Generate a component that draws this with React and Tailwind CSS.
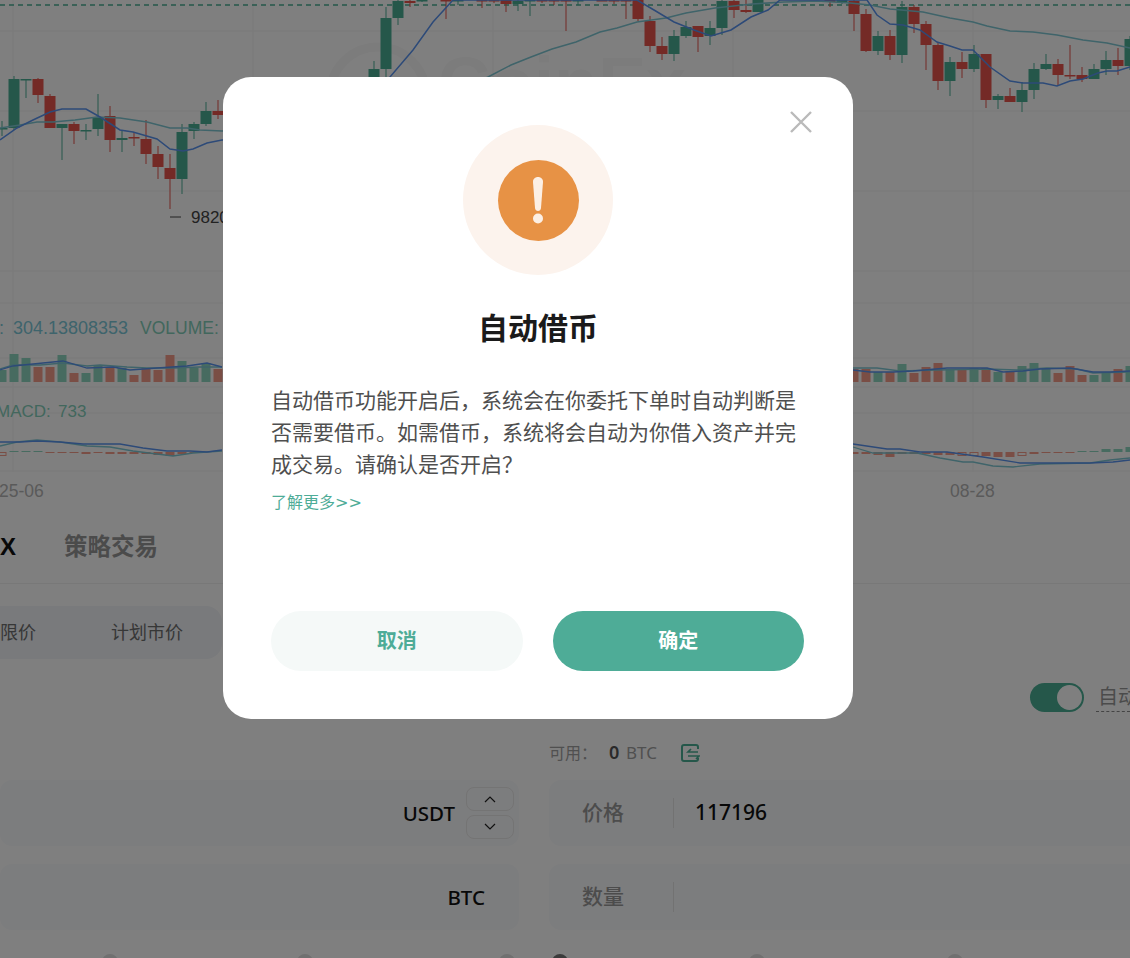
import React from 'react';

const GREEN = '#4aaf95';
const RED = '#e8544d';
const GRID = '#f3f3f3';

// [x, bodyTop, bodyBottom, wickTop, wickBottom, color]
const candles = [
  [2, 128, 129, 121, 136, 'g'], [14, 79, 128, 76, 130, 'g'], [26, 79, 80, 79, 98, 'g'], [38, 79, 95, 78, 103, 'r'],
  [50, 96, 128, 94, 128, 'r'], [62, 124, 128, 124, 160, 'g'], [74, 124, 131, 122, 144, 'r'], [86, 130, 131, 124, 140, 'g'],
  [98, 117, 129, 94, 136, 'g'], [110, 116, 140, 106, 152, 'r'], [122, 138, 140, 131, 152, 'g'], [134, 137, 138, 132, 146, 'r'],
  [146, 139, 154, 120, 164, 'r'], [158, 154, 167, 146, 179, 'r'], [170, 168, 179, 154, 209, 'r'], [182, 132, 179, 124, 194, 'g'],
  [194, 124, 131, 122, 139, 'g'], [206, 111, 124, 102, 126, 'g'], [218, 111, 115, 100, 119, 'r'],
  [374, 69, 90, 61, 90, 'g'], [386, 18, 69, 7, 80, 'g'], [398, 1, 18, 0, 25, 'g'], [410, 1, 3, 0, 7, 'r'], [422, 0, 1, 0, 2, 'g'],
  [446, 0, 1, 0, 19, 'r'], [458, 0, 1, 0, 5, 'g'], [482, 0, 1, 0, 8, 'r'], [494, 0, 1, 0, 3, 'r'], [506, 0, 4, 0, 12, 'r'],
  [518, 1, 4, 0, 11, 'g'], [530, 0, 1, 0, 16, 'g'], [542, 0, 1, 0, 3, 'r'], [554, 0, 1, 0, 5, 'r'], [566, 0, 1, 0, 31, 'r'],
  [578, 0, 1, 0, 5, 'g'], [602, 0, 1, 0, 1, 'r'], [614, 0, 1, 0, 4, 'r'], [626, 0, 1, 0, 19, 'r'], [638, 0, 19, 0, 21, 'r'],
  [650, 21, 46, 16, 52, 'r'], [662, 46, 54, 37, 60, 'r'], [674, 36, 54, 30, 61, 'g'], [686, 27, 36, 21, 38, 'g'],
  [698, 26, 37, 26, 52, 'r'], [710, 28, 36, 21, 45, 'g'], [722, 1, 28, 0, 35, 'g'], [734, 1, 10, 0, 18, 'r'],
  [746, 10, 12, 0, 13, 'r'], [758, 0, 12, 0, 12, 'g'], [830, 0, 2, 0, 7, 'r'], [842, 0, 2, 0, 4, 'g'],
  [854, 1, 14, 0, 31, 'r'], [866, 14, 51, 9, 52, 'r'], [878, 36, 51, 31, 55, 'g'], [890, 36, 55, 30, 60, 'r'],
  [902, 7, 55, 1, 63, 'g'], [914, 7, 24, 5, 33, 'r'], [926, 24, 45, 21, 70, 'r'], [938, 45, 81, 43, 90, 'r'],
  [950, 62, 81, 57, 96, 'g'], [962, 62, 69, 52, 78, 'r'], [974, 54, 69, 45, 72, 'g'], [986, 54, 100, 54, 108, 'r'],
  [998, 96, 100, 94, 109, 'g'], [1010, 96, 102, 88, 102, 'r'], [1022, 90, 102, 82, 112, 'g'], [1034, 69, 90, 63, 99, 'g'],
  [1046, 64, 69, 54, 70, 'g'], [1058, 64, 75, 59, 86, 'r'], [1070, 75, 76, 45, 79, 'r'], [1082, 75, 79, 67, 82, 'r'],
  [1094, 69, 79, 64, 79, 'g'], [1106, 60, 69, 51, 75, 'g'], [1118, 60, 66, 48, 75, 'r'], [1130, 39, 66, 36, 70, 'g'],
];

const maBlue = '0,140 17,128 33,120 50,112 62,109 86,109 100,117 120,130 133,132 157,139 170,149 183,151 193,149 207,143 222,140 300,140 390,77 413,50 433,22 453,0 637,0 654,10 674,22 694,30 711,36 731,30 751,17 768,10 780,0 867,0 877,15 890,24 903,25 920,30 937,42 950,46 962,50 973,50 990,67 1010,81 1023,83 1043,83 1057,86 1070,81 1083,79 1098,73 1107,71 1117,71 1130,67';
const maTeal = '0,128 20,125 37,122 53,122 75,120 97,117 120,118 147,122 170,128 187,128 200,130 222,131 400,120 488,77 511,65 531,57 552,49 576,42 600,32 617,28 637,22 666,18 686,13 715,8 752,4 784,2 817,1 850,3 870,5 890,9 923,12 950,18 973,22 987,26 1010,31 1033,32 1057,35 1083,40 1107,43 1130,48';

// [x, top, color]
const volumes = [
  [2, 370, 'g'], [14, 354, 'g'], [26, 358, 'g'], [38, 367, 'r'], [50, 367, 'r'], [62, 355, 'g'], [74, 373, 'r'], [86, 373, 'g'],
  [98, 365, 'g'], [110, 367, 'r'], [122, 368, 'g'], [134, 375, 'r'], [146, 368, 'r'], [158, 370, 'r'], [170, 355, 'r'],
  [182, 361, 'g'], [194, 368, 'g'], [206, 363, 'g'], [218, 369, 'r'],
  [854, 369, 'r'], [866, 369, 'r'], [878, 372, 'g'], [890, 372, 'r'], [902, 364, 'g'], [914, 373, 'r'], [926, 367, 'r'],
  [938, 363, 'r'], [950, 369, 'g'], [962, 370, 'r'], [974, 368, 'g'], [986, 368, 'r'], [998, 372, 'g'], [1010, 371, 'r'],
  [1022, 366, 'g'], [1034, 363, 'g'], [1046, 368, 'g'], [1058, 373, 'r'], [1070, 366, 'r'], [1082, 375, 'r'], [1094, 375, 'g'],
  [1106, 372, 'g'], [1118, 369, 'r'], [1130, 366, 'g'],
];

const volBlueL = '0,370 13,366 33,364 53,362 63,361 87,368 113,367 130,370 157,368 187,366 207,363 222,367';
const volTealL = '0,369 13,365 40,365 63,363 87,366 100,365 127,367 147,368 173,368 200,367 222,367';
const volBlueR = '853,370 870,372 893,372 913,371 947,368 987,368 1003,372 1023,371 1040,369 1070,368 1093,372 1110,372 1130,371';
const volTealR = '853,368 877,368 900,371 937,370 987,369 1017,370 1047,368 1077,369 1093,373 1130,372';

// [x, height (negative is above the zero line), color, hollow]
const macdBars = [
  [2, 3, 'r', true], [14, -1, 'g'], [26, -1, 'g'], [38, -1, 'g'], [50, 1, 'r'], [62, 1, 'r'], [74, 1, 'r'], [86, 2, 'r'],
  [98, 1, 'r'], [110, 2, 'r'], [122, 2, 'r'], [134, 2, 'r'], [146, 2, 'r'], [158, 3, 'r'], [170, 4, 'r'], [182, 2, 'r'], [194, 1, 'r'],
  [854, 2, 'r'], [866, 2, 'r'], [878, 3, 'r'], [890, 5, 'r'], [902, 2, 'r'], [914, 2, 'r'], [926, 2, 'r'], [938, 3, 'r'],
  [950, 3, 'r'], [962, 3, 'r', true], [974, 3, 'r', true], [986, 4, 'r'], [998, 5, 'r'], [1010, 5, 'r'], [1022, 3, 'r', true],
  [1034, 2, 'r'], [1046, 1, 'r'], [1058, 1, 'r'], [1070, 1, 'r'], [1082, -1, 'g'], [1094, -1, 'g'], [1106, -3, 'g'],
  [1118, -3, 'g'], [1130, -5, 'g'],
];

const macdBlueL = '0,442 20,442 37,441 60,442 83,444 120,444 143,448 167,451 190,451 207,452 222,450';
const macdTealL = '0,446 17,442 37,440 60,442 87,446 110,447 133,451 157,454 173,456 193,453 207,452 222,451';
const macdBlueR = '853,444 887,449 900,449 920,452 947,452 983,457 1020,463 1050,463 1090,463 1113,462 1130,460';
const macdTealR = '853,447 873,453 893,453 917,453 940,458 963,462 973,462 993,466 1013,467 1040,464 1090,463 1110,460 1130,458';

const BLUE_LINE = '#5a94f0';
const TEAL_LINE = '#7fc8d4';

function KlineChart() {
  return (
    <svg width="1130" height="505" viewBox="0 0 1130 505" className="block shrink-0">
      {[13, 253, 493, 733, 973].map((x) => (
        <line key={x} x1={x} x2={x} y1="0" y2="472" stroke={GRID} />
      ))}
      {[31, 111, 191, 271, 303, 358, 387, 413, 471].map((y) => (
        <line key={y} x1="0" x2="1130" y1={y} y2={y} stroke={GRID} />
      ))}

      {/* watermark */}
      <circle cx="378" cy="95" r="48" fill="none" stroke="#f8f8f8" strokeWidth="9" />
      <text x="438" y="108" fontSize="72" fontFamily="Liberation Sans, sans-serif" fontWeight="700" fill="#f8f8f8">CoinEx</text>

      <line x1="0" x2="1130" y1="5" y2="5" stroke={GREEN} strokeWidth="1.600" strokeDasharray="5 4" />

      {candles.map(([x, top, bottom, hi, lo, c]) => {
        const color = c === 'g' ? GREEN : RED;
        return (
          <g key={x} fill={color}>
            <rect x={x - 0.5} y={hi} width="1" height={lo - hi} />
            <rect x={x - 5.5} y={top} width="11" height={Math.max(bottom - top, 1.5)} />
          </g>
        );
      })}
      <polyline points={maTeal} fill="none" stroke={TEAL_LINE} strokeWidth="1.500" />
      <polyline points={maBlue} fill="none" stroke={BLUE_LINE} strokeWidth="1.500" />

      <g fontFamily="Liberation Sans, sans-serif">
        <line x1="170" x2="181" y1="217" y2="217" stroke="#444" />
        <text x="191" y="223" fontSize="17" fill="#444">98200</text>
        <text x="-1" y="334" fontSize="18" fill="#7cc8d8">:</text>
        <text x="13" y="334" fontSize="18" fill="#7cc8d8">304.13808353</text>
        <text x="140" y="334" fontSize="17.500" fill="#84cfba">VOLUME:</text>
        <text x="-4" y="417" fontSize="17" fill="#84cfba">MACD:</text>
        <text x="58" y="417" fontSize="17" fill="#84cfba">733</text>
        <text x="-1" y="497" fontSize="17.500" fill="#b4b4b4">25-06</text>
        <text x="950" y="497" fontSize="17.500" fill="#b4b4b4">08-28</text>
      </g>

      {volumes.map(([x, top, c]) => (
        <rect key={x} x={x - 4.5} y={top} width="9" height={382 - top} fill={c === 'g' ? '#8fd6c0' : '#f59c8a'} />
      ))}
      <polyline points={volTealL} fill="none" stroke={TEAL_LINE} strokeWidth="1.300" />
      <polyline points={volBlueL} fill="none" stroke={BLUE_LINE} strokeWidth="1.300" />
      <polyline points={volTealR} fill="none" stroke={TEAL_LINE} strokeWidth="1.300" />
      <polyline points={volBlueR} fill="none" stroke={BLUE_LINE} strokeWidth="1.300" />

      {macdBars.map(([x, h, c, hollow]) => {
        const color = c === 'g' ? '#8fd6c0' : '#f59c8a';
        const y = h < 0 ? 452 + h : 452;
        return hollow ? (
          <rect key={x} x={x - 4} y={y + 0.5} width="8" height={Math.abs(h)} fill="none" stroke={color} />
        ) : (
          <rect key={x} x={x - 4.5} y={y} width="9" height={Math.abs(h)} fill={color} />
        );
      })}
      <polyline points={macdTealL} fill="none" stroke={TEAL_LINE} strokeWidth="1.300" />
      <polyline points={macdBlueL} fill="none" stroke={BLUE_LINE} strokeWidth="1.300" />
      <polyline points={macdTealR} fill="none" stroke={TEAL_LINE} strokeWidth="1.300" />
      <polyline points={macdBlueR} fill="none" stroke={BLUE_LINE} strokeWidth="1.300" />
    </svg>
  );
}

function Stepper() {
  return (
    <div className="flex flex-col gap-1 ml-[11px]">
      <div className="w-[48px] h-[24px] rounded-lg border border-[#e8e8e8] flex items-center justify-center">
        <svg width="14" height="8" viewBox="0 0 14 8" fill="none" stroke="#222" strokeWidth="1.2"><path d="M2 7l5-5 5 5" /></svg>
      </div>
      <div className="w-[48px] h-[24px] rounded-lg border border-[#e8e8e8] flex items-center justify-center">
        <svg width="14" height="8" viewBox="0 0 14 8" fill="none" stroke="#222" strokeWidth="1.2"><path d="M2 1l5 5 5-5" /></svg>
      </div>
    </div>
  );
}

function TradePanel() {
  return (
    <div className="flex flex-col grow">
      <div className="h-[79px] pt-[5px] border-b border-[#f1f1f1] flex items-center gap-[48px] shrink-0">
        <span className="text-[24px] font-bold text-[#111] font-['Liberation_Sans',sans-serif] leading-none">X</span>
        <span className="text-[23.5px] font-bold text-[#979797]">策略交易</span>
      </div>

      <div className="mt-[22px] h-[53px] w-[222px] rounded-r-2xl bg-[#f2f4f8] flex items-center text-[18px] text-[#6e6e6e] shrink-0">
        <span className="w-[111px]">限价</span>
        <span>计划市价</span>
      </div>

      <div className="mt-[23px] h-[30px] flex justify-end items-center shrink-0">
        <div className="w-[54px] h-[29px] rounded-full bg-[#4aaf95] flex items-center justify-end pr-[2px]">
          <div className="w-[25px] h-[25px] rounded-full bg-white" />
        </div>
        <span className="ml-[12px] w-[34px] pl-[2px] mt-[1px] whitespace-nowrap text-[20px] leading-[28px] text-[#979797] border-b border-dashed border-[#888]">自动借币</span>
      </div>

      <div className="mt-[28px] flex gap-[30px]">
        <div className="w-[519px] shrink-0 flex flex-col gap-[18px]">
          <div className="mt-[40px] h-[66px] rounded-xl bg-[#f9fafc] flex items-center justify-end pr-[5px]">
            <span className="text-[20.5px] font-medium text-[#111]">USDT</span>
            <Stepper />
          </div>
          <div className="h-[66px] rounded-xl bg-[#f9fafc] flex items-center justify-end pr-[34px]">
            <span className="text-[20.5px] font-medium text-[#111]">BTC</span>
          </div>
        </div>

        <div className="grow flex flex-col">
          <div className="h-[27px] flex items-center text-[16px] text-[#a0a0a0] -mt-[1px]">
            <span className="w-[60px]">可用：</span>
            <span className="text-[18px] font-semibold text-[#555] w-[17px]">0</span>
            <span className="text-[17px]">BTC</span>
            <svg className="ml-[23px]" width="20" height="20" viewBox="0 0 20 20" fill="none" stroke={GREEN} strokeWidth="2">
              <path d="M18 6V4a2 2 0 0 0-2-2H4a2 2 0 0 0-2 2v12a2 2 0 0 0 2 2h12a2 2 0 0 0 2-2v-1" />
              <path d="M18 9H8l3-3M8 13h11l-3 3" strokeWidth="1.7" />
            </svg>
          </div>
          <div className="mt-[14px] h-[66px] w-[640px] rounded-xl bg-[#f9fafc] flex items-center">
            <span className="w-[124px] pl-[33px] text-[21px] font-medium text-[#999]">价格</span>
            <div className="w-px h-[30px] bg-[#e4e4e4]" />
            <span className="ml-[21px] text-[21px] font-medium text-[#111]">117196</span>
          </div>
          <div className="mt-[18px] h-[66px] w-[640px] rounded-xl bg-[#f9fafc] flex items-center">
            <span className="w-[124px] pl-[33px] text-[21px] font-medium text-[#999]">数量</span>
            <div className="w-px h-[30px] bg-[#e4e4e4]" />
          </div>
        </div>
      </div>

      {/* slider dots, only their tops are on screen */}
      <div className="mt-[24px] h-[16px] relative shrink-0">
        {[110, 305, 507, 757, 955].map((x) => (
          <div key={x} style={{ left: x - 8 }} className="absolute top-0 w-[16px] h-[16px] rounded-full bg-[#e0e0e0]" />
        ))}
        <div className="absolute top-0 left-[552px] w-[16px] h-[16px] rounded-full bg-[#777]" />
      </div>
    </div>
  );
}

function AutoBorrowModal() {
  return (
    <div className="absolute inset-0 bg-black/50 flex justify-start items-start pl-[223px] pt-[77px]">
      <div className="relative w-[630px] h-[642px] bg-white rounded-[28px] px-[49px] flex flex-col">
        <button className="absolute top-[34px] right-[41px]" aria-label="close">
          <svg width="22" height="22" viewBox="0 0 22 22" fill="none" stroke="#bababa" strokeWidth="2.4"><path d="M1 1l20 20M21 1L1 21" /></svg>
        </button>

        <div className="mt-[48px] mx-auto w-[150px] h-[150px] rounded-full bg-[#fcf3ed] flex items-center justify-center">
          <div className="w-[81px] h-[81px] rounded-full bg-[#e79245] flex items-center justify-center">
            <svg width="14" height="47" viewBox="0 0 14 47">
              <path d="M7 0c3 0 5.2 2.2 5 5l-2 26c-.2 2-1.4 3-3 3s-2.800-1-3-3L2 5C1.800 2.200 4 0 7 0z" fill="#fcefe4" />
              <circle cx="7" cy="41.500" r="5" fill="#fcefe4" />
            </svg>
          </div>
        </div>

        <h2 className="mt-[31px] text-center text-[30px] leading-[44px] font-bold text-[#1a1a1a]">自动借币</h2>

        <p className="mt-[34px] -ml-px text-[21px] leading-[32px] text-[#4f4f4f]">
          自动借币功能开启后，系统会在你委托下单时自动判断是否需要借币。如需借币，系统将会自动为你借入资产并完成交易。请确认是否开启？
        </p>
        <a className="mt-[10px] -ml-px text-[16px] leading-[24px] text-[#4eac97]">
          了解更多<span className="font-['DejaVu_Sans',sans-serif]">&gt;&gt;</span>
        </a>

        <div className="mt-auto mb-[48px] flex gap-[30px] -ml-px">
          <button className="w-[252px] h-[60px] rounded-full bg-[#f5f9f8] text-[20px] font-bold text-[#4eac97]">取消</button>
          <button className="w-[252px] h-[60px] rounded-full bg-[#4eac97] text-[20px] font-bold text-white">确定</button>
        </div>
      </div>
    </div>
  );
}

export default function App() {
  return (
    <div className="relative w-[1130px] h-[958px] overflow-hidden bg-white flex flex-col font-['Noto_Sans','Noto_Sans_CJK_SC',sans-serif]">
      <KlineChart />
      <TradePanel />
      <AutoBorrowModal />
    </div>
  );
}
